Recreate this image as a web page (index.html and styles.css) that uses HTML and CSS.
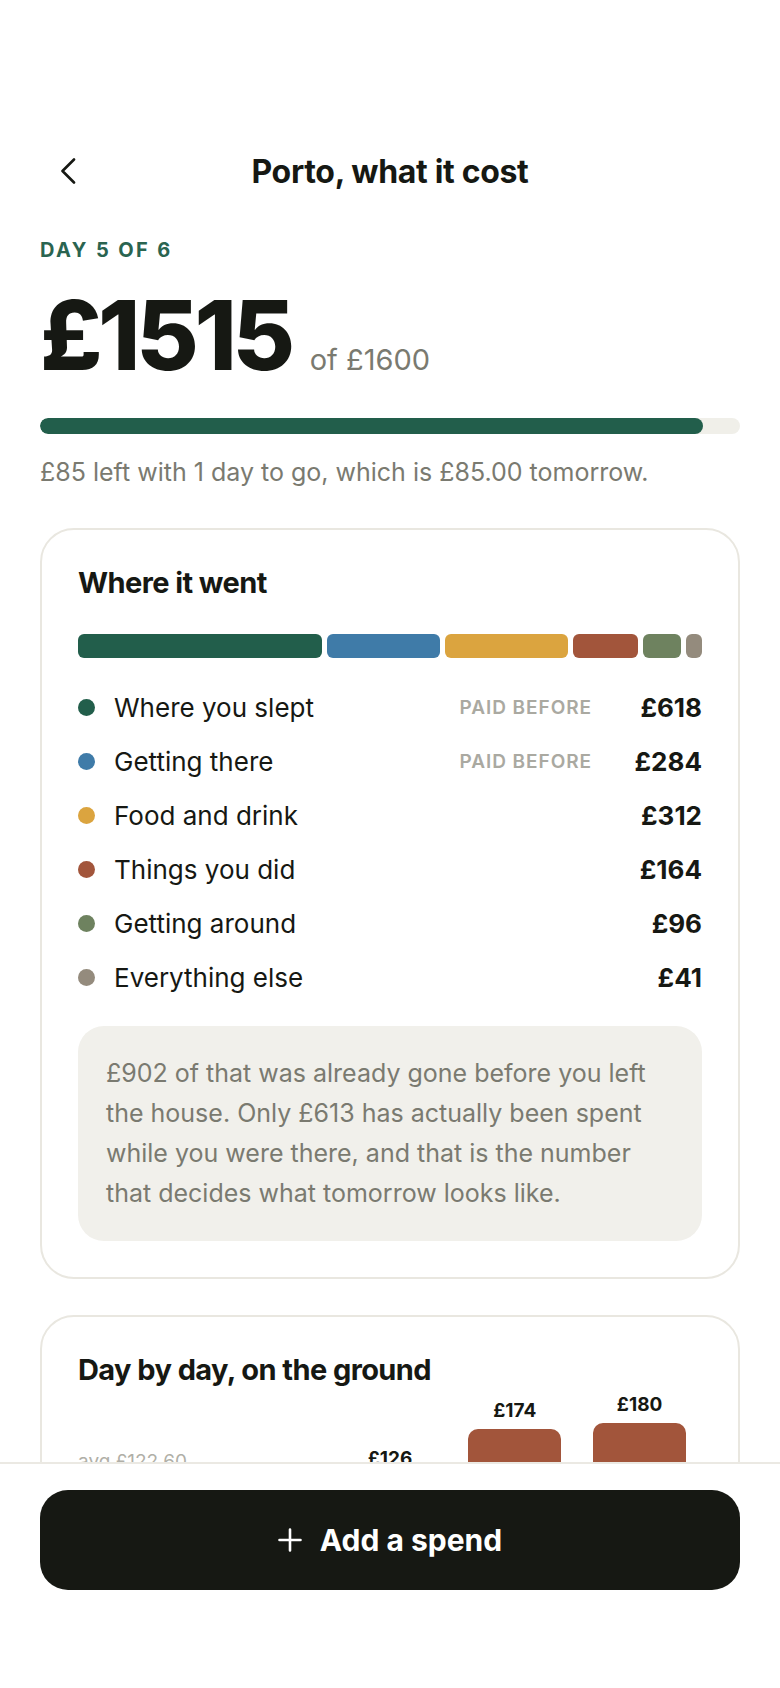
FILE: index.html
```
<!DOCTYPE html>
<html lang="en">
<head>
<meta charset="utf-8">
<meta name="viewport" content="width=device-width, initial-scale=1">
<title>Porto, what it cost</title>
<link rel="stylesheet" href="styles.css">
</head>
<body>
<div class="screen">
  <header class="topbar">
    <button class="back" aria-label="Back">
      <svg width="16" height="26" viewBox="0 0 16 26" aria-hidden="true"><path d="M14 1.5 L2.5 13 L14 24.5" fill="none" stroke="#161813" stroke-width="2.6" stroke-linecap="round" stroke-linejoin="round"/></svg>
    </button>
    <h1 class="title">Porto, what it cost</h1>
    <span class="spacer"></span>
  </header>

  <p class="eyebrow">DAY 5 OF 6</p>
  <div class="total">
    <span class="total-amount">£1515</span>
    <span class="total-budget">of £1600</span>
  </div>
  <div class="progress"><div class="progress-fill" style="width:94.7%"></div></div>
  <p class="caption">£85 left with 1 day to go, which is £85.00 tomorrow.</p>

  <section class="card">
    <h2 class="card-title">Where it went</h2>
    <div class="split">
      <span class="seg c-slept" style="flex-grow:618"></span>
      <span class="seg c-there" style="flex-grow:284"></span>
      <span class="seg c-food" style="flex-grow:312"></span>
      <span class="seg c-did" style="flex-grow:164"></span>
      <span class="seg c-around" style="flex-grow:96"></span>
      <span class="seg c-else" style="flex-grow:41"></span>
    </div>
    <ul class="legend">
      <li class="row"><span class="dot c-slept"></span><span class="label">Where you slept</span><span class="tag">PAID BEFORE</span><span class="value">£618</span></li>
      <li class="row"><span class="dot c-there"></span><span class="label">Getting there</span><span class="tag">PAID BEFORE</span><span class="value">£284</span></li>
      <li class="row"><span class="dot c-food"></span><span class="label">Food and drink</span><span class="value">£312</span></li>
      <li class="row"><span class="dot c-did"></span><span class="label">Things you did</span><span class="value">£164</span></li>
      <li class="row"><span class="dot c-around"></span><span class="label">Getting around</span><span class="value">£96</span></li>
      <li class="row"><span class="dot c-else"></span><span class="label">Everything else</span><span class="value">£41</span></li>
    </ul>
    <p class="note">£902 of that was already gone before you left the house. Only £613 has actually been spent while you were there, and that is the number that decides what tomorrow looks like.</p>
  </section>

  <section class="card card-days">
    <h2 class="card-title">Day by day, on the ground</h2>
    <div class="chart">
      <div class="avg-line"></div>
      <span class="avg-label">avg £122.60</span>
      <div class="col"><span class="col-value">£58</span><span class="bar" style="height:50px"></span></div>
      <div class="col"><span class="col-value">£75</span><span class="bar" style="height:66px"></span></div>
      <div class="col"><span class="col-value">£126</span><span class="bar" style="height:112px"></span></div>
      <div class="col"><span class="col-value">£174</span><span class="bar" style="height:160px"></span></div>
      <div class="col"><span class="col-value">£180</span><span class="bar" style="height:166px"></span></div>
    </div>
    <div class="days">
      <span>Day 1</span><span>Day 2</span><span>Day 3</span><span>Day 4</span><span>Day 5</span>
    </div>
  </section>
</div>

<footer class="footer">
  <button class="cta">
    <svg width="24" height="24" viewBox="0 0 24 24" aria-hidden="true"><path d="M12 1.5 V22.5 M1.5 12 H22.5" fill="none" stroke="#ffffff" stroke-width="2.6" stroke-linecap="round"/></svg>
    <span>Add a spend</span>
  </button>
</footer>
</body>
</html>
```
FILE: styles.css
```
* { box-sizing: border-box; }

html, body {
  margin: 0;
  padding: 0;
  background: #ffffff;
}

body {
  font-family: Inter, "Noto Sans", "Liberation Sans", sans-serif;
  color: #161813;
}

.screen {
  padding: 147px 40px 260px;
}

.topbar {
  display: grid;
  grid-template-columns: 56px 1fr 56px;
  align-items: center;
  height: 48px;
}

.back {
  display: flex;
  align-items: center;
  justify-content: flex-start;
  height: 48px;
  padding: 0 0 0 20px;
  border: 0;
  background: none;
}

.title {
  margin: 0;
  text-align: center;
  font-size: 32px;
  font-weight: 700;
  letter-spacing: -0.01em;
}

.eyebrow {
  margin: 43px 0 0;
  font-size: 20px;
  line-height: 24px;
  font-weight: 700;
  letter-spacing: 0.12em;
  color: #2a6450;
}

.total {
  display: flex;
  align-items: baseline;
  gap: 19px;
  margin-top: 25px;
}

.total-amount {
  font-size: 96px;
  line-height: 1;
  font-weight: 800;
  letter-spacing: -0.045em;
}

.total-budget {
  font-size: 29px;
  color: #7a7a70;
}

.progress {
  margin-top: 35px;
  height: 16px;
  border-radius: 8px;
  background: #f0efe9;
  overflow: hidden;
}

.progress-fill {
  height: 100%;
  border-radius: 8px;
  background: #225e4b;
}

.caption {
  margin: 23px 0 0;
  font-size: 25px;
  color: #7a7a70;
}

.card {
  margin-top: 41px;
  padding: 36px;
  border: 2px solid #e9e7e0;
  border-radius: 34px;
  background: #ffffff;
}

.card-days {
  margin-top: 36px;
}

.card-title {
  margin: 0;
  font-size: 29px;
  line-height: 34px;
  font-weight: 700;
  letter-spacing: -0.02em;
}

.split {
  display: flex;
  gap: 5px;
  height: 24px;
  margin-top: 34px;
}

.seg {
  flex-basis: 0;
  border-radius: 6px;
}

.c-slept { background: #225e4b; }
.c-there { background: #3f7ba8; }
.c-food { background: #dba43f; }
.c-did { background: #a2553b; }
.c-around { background: #6e825f; }
.c-else { background: #948b7d; }

.legend {
  list-style: none;
  margin: 22px 0 0;
  padding: 0;
}

.row {
  display: flex;
  align-items: center;
  height: 54px;
}

.dot {
  width: 17px;
  height: 17px;
  border-radius: 50%;
  flex: none;
}

.label {
  flex: 1;
  margin-left: 19px;
  font-size: 26px;
}

.tag {
  font-size: 19px;
  font-weight: 600;
  letter-spacing: 0.05em;
  color: #aaa9a1;
}

.value {
  width: 110px;
  text-align: right;
  font-size: 26px;
  font-weight: 700;
}

.note {
  margin: 22px 0 0;
  padding: 27px 28px 28px;
  border-radius: 26px;
  background: #f1f0eb;
  font-size: 25px;
  line-height: 40px;
  color: #7a7a70;
}

.chart {
  position: relative;
  display: flex;
  align-items: flex-end;
  height: 196px;
  margin-top: 6px;
}

.col {
  flex: 1;
  display: flex;
  flex-direction: column;
  align-items: center;
  justify-content: flex-end;
  padding: 0 16px;
  height: 100%;
}

.col-value {
  font-size: 19px;
  line-height: 24px;
  font-weight: 700;
  margin-bottom: 6px;
}

.bar {
  width: 100%;
  border-radius: 10px 10px 4px 4px;
  background: #a2553b;
}

.avg-line {
  position: absolute;
  left: 0;
  right: 0;
  bottom: 113px;
  border-top: 2px dashed #d6d4cc;
}

.avg-label {
  position: absolute;
  left: 0;
  bottom: 115px;
  font-size: 19px;
  line-height: 24px;
  color: #b0afa7;
}

.days {
  display: flex;
  margin-top: 12px;
}

.days span {
  flex: 1;
  text-align: center;
  font-size: 18px;
  color: #7a7a70;
}

.footer {
  position: fixed;
  left: 0;
  right: 0;
  bottom: 0;
  padding: 26px 40px 98px;
  border-top: 2px solid #ebe9e3;
  background: #ffffff;
}

.cta {
  display: flex;
  align-items: center;
  justify-content: center;
  gap: 18px;
  width: 100%;
  height: 100px;
  border: 0;
  border-radius: 28px;
  background: #161813;
  color: #ffffff;
  font-family: Inter, "Noto Sans", "Liberation Sans", sans-serif;
  font-size: 30px;
  font-weight: 700;
  letter-spacing: 0;
}
```
